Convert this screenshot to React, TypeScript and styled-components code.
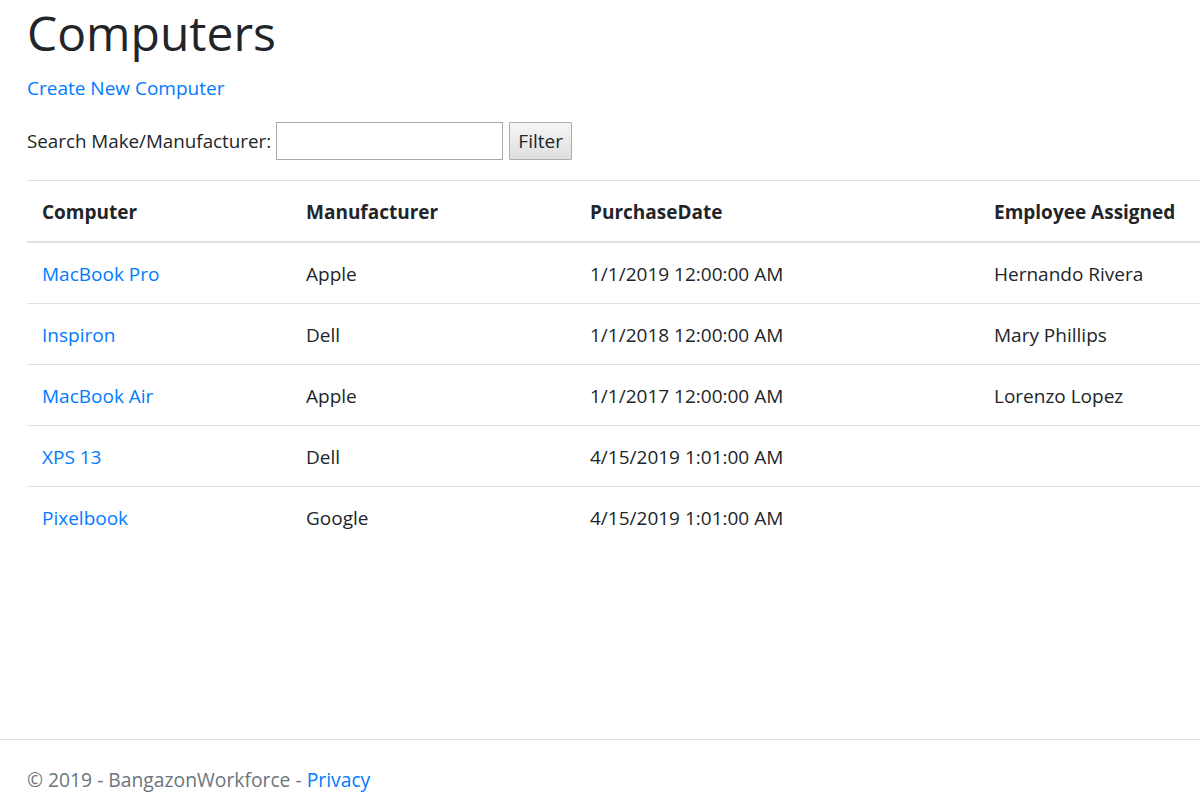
import React from "react";
import styled, { createGlobalStyle } from "styled-components";

const FONT = `"Open Sans", "Liberation Sans", sans-serif`;

const GlobalStyle = createGlobalStyle`
  html, body {
    margin: 0;
    padding: 0;
    background: #ffffff;
  }
  body {
    font-family: ${FONT};
    font-size: 19px;
    line-height: 30px;
    color: #212529;
    overflow: hidden;
  }
  * { box-sizing: border-box; }
`;

const Page = styled.div`
  width: 1200px;
  overflow: hidden;
`;

const Main = styled.main`
  min-height: 739px;
  padding: 3px 0 0 27px;
`;

const Title = styled.h1`
  margin: 0 0 10px;
  font-size: 48px;
  font-weight: 400;
  line-height: 60px;
  color: #212529;
`;

const Para = styled.p`
  margin: 0 0 19px;
`;

const Link = styled.a`
  color: #007bff;
  text-decoration: none;
`;

const SearchForm = styled.form`
  display: flex;
  align-items: center;
  height: 38px;
  margin: 0 0 20px;
`;

const Label = styled.label`
  font-size: 18.8px;
  margin-right: 5px;
`;

const SearchInput = styled.input`
  width: 227px;
  height: 38px;
  border: 1px solid #a9a9a9;
  padding: 2px 4px;
  font: inherit;
  background: #fff;
  margin-right: 6px;
`;

const Button = styled.button`
  width: 63px;
  height: 38px;
  border: 1px solid #adadad;
  border-radius: 1px;
  background: linear-gradient(#f6f6f6, #dedede);
  font: inherit;
  color: #212529;
  padding: 0;
`;

const Table = styled.table`
  width: 1173px;
  border-collapse: collapse;
  table-layout: fixed;
`;

const Col = styled.col<{ $w: number }>`
  width: ${(p) => p.$w}px;
`;

const Th = styled.th`
  text-align: left;
  font-weight: 700;
  padding: 16px 15px 14px;
  line-height: 30px;
  border-top: 1px solid #dee2e6;
  border-bottom: 2px solid #dee2e6;
  white-space: nowrap;
`;

const Td = styled.td`
  padding: 16px 15px 14px;
  line-height: 30px;
  border-top: 1px solid #dee2e6;
  white-space: nowrap;
`;

const Footer = styled.footer`
  border-top: 1px solid #dee2e6;
  padding: 2px 0 0 27px;
  font-size: 19.3px;
  line-height: 75px;
  color: #6c757d;
`;

const rows = [
  { name: "MacBook Pro", make: "Apple", date: "1/1/2019 12:00:00 AM", emp: "Hernando Rivera" },
  { name: "Inspiron", make: "Dell", date: "1/1/2018 12:00:00 AM", emp: "Mary Phillips" },
  { name: "MacBook Air", make: "Apple", date: "1/1/2017 12:00:00 AM", emp: "Lorenzo Lopez" },
  { name: "XPS 13", make: "Dell", date: "4/15/2019 1:01:00 AM", emp: "" },
  { name: "Pixelbook", make: "Google", date: "4/15/2019 1:01:00 AM", emp: "" },
];

export default function App() {
  return (
    <Page>
      <GlobalStyle />
      <Main>
        <Title>Computers</Title>
        <Para>
          <Link href="#">Create New Computer</Link>
        </Para>
        <SearchForm onSubmit={(e) => e.preventDefault()}>
          <Label htmlFor="q">Search Make/Manufacturer:</Label>
          <SearchInput id="q" type="text" />
          <Button type="submit">Filter</Button>
        </SearchForm>
        <Table>
          <colgroup>
            <Col $w={264} />
            <Col $w={284} />
            <Col $w={404} />
            <Col $w={221} />
          </colgroup>
          <thead>
            <tr>
              <Th>Computer</Th>
              <Th>Manufacturer</Th>
              <Th>PurchaseDate</Th>
              <Th>Employee Assigned</Th>
            </tr>
          </thead>
          <tbody>
            {rows.map((r) => (
              <tr key={r.name}>
                <Td>
                  <Link href="#">{r.name}</Link>
                </Td>
                <Td>{r.make}</Td>
                <Td>{r.date}</Td>
                <Td>{r.emp}</Td>
              </tr>
            ))}
          </tbody>
        </Table>
      </Main>
      <Footer>
        © 2019 - BangazonWorkforce - <Link href="#">Privacy</Link>
      </Footer>
    </Page>
  );
}
